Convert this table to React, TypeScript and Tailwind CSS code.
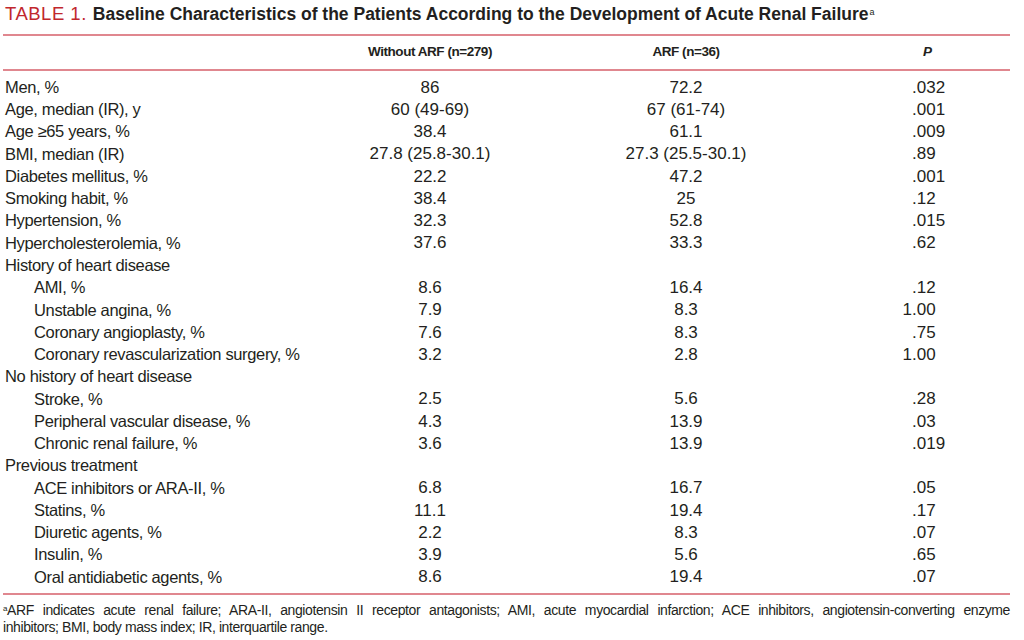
type Row = {
  label: string
  a?: string
  b?: string
  p?: string
  indent?: boolean
}

const rows: Row[] = [
  { label: 'Men, %', a: '86', b: '72.2', p: '.032' },
  { label: 'Age, median (IR), y', a: '60 (49-69)', b: '67 (61-74)', p: '.001' },
  { label: 'Age ≥65 years, %', a: '38.4', b: '61.1', p: '.009' },
  { label: 'BMI, median (IR)', a: '27.8 (25.8-30.1)', b: '27.3 (25.5-30.1)', p: '.89' },
  { label: 'Diabetes mellitus, %', a: '22.2', b: '47.2', p: '.001' },
  { label: 'Smoking habit, %', a: '38.4', b: '25', p: '.12' },
  { label: 'Hypertension, %', a: '32.3', b: '52.8', p: '.015' },
  { label: 'Hypercholesterolemia, %', a: '37.6', b: '33.3', p: '.62' },
  { label: 'History of heart disease' },
  { label: 'AMI, %', a: '8.6', b: '16.4', p: '.12', indent: true },
  { label: 'Unstable angina, %', a: '7.9', b: '8.3', p: '1.00', indent: true },
  { label: 'Coronary angioplasty, %', a: '7.6', b: '8.3', p: '.75', indent: true },
  { label: 'Coronary revascularization surgery, %', a: '3.2', b: '2.8', p: '1.00', indent: true },
  { label: 'No history of heart disease' },
  { label: 'Stroke, %', a: '2.5', b: '5.6', p: '.28', indent: true },
  { label: 'Peripheral vascular disease, %', a: '4.3', b: '13.9', p: '.03', indent: true },
  { label: 'Chronic renal failure, %', a: '3.6', b: '13.9', p: '.019', indent: true },
  { label: 'Previous treatment' },
  { label: 'ACE inhibitors or ARA-II, %', a: '6.8', b: '16.7', p: '.05', indent: true },
  { label: 'Statins, %', a: '11.1', b: '19.4', p: '.17', indent: true },
  { label: 'Diuretic agents, %', a: '2.2', b: '8.3', p: '.07', indent: true },
  { label: 'Insulin, %', a: '3.9', b: '5.6', p: '.65', indent: true },
  { label: 'Oral antidiabetic agents, %', a: '8.6', b: '19.4', p: '.07', indent: true },
]

// decimal-aligned P values: the point sits at a fixed offset in the column
function PValue({ value }: { value?: string }) {
  if (!value) return null
  const dot = value.indexOf('.')
  return (
    <div className="flex">
      <span className="w-[90px] text-right">{value.slice(0, dot)}</span>
      <span>{value.slice(dot)}</span>
    </div>
  )
}

export default function App() {
  return (
    <div className="h-[640px] w-[1024px] bg-white font-['Liberation_Sans',Arial,sans-serif] text-[#231f20]">
      <div className="ml-[3px] w-[1007px]">
        <h1 className="flex h-[34px] items-center pb-[5px] pl-[2px] leading-none">
          <span className="text-[18.5px] tracking-[0.5px] text-[#c1272d]">TABLE 1.</span>
          <span className="ml-[6px] text-[17.5px] font-bold">
            Baseline Characteristics of the Patients According to the Development of Acute Renal Failure
            <sup className="ml-[1px] text-[9px] font-normal">a</sup>
          </span>
        </h1>

        <div className="grid h-[37px] grid-cols-[307px_240px_272px_1fr] items-center border-y-2 border-[#e0878f] text-[13.5px] font-bold tracking-[-0.45px]">
          <div />
          <div className="text-center">Without ARF (n=279)</div>
          <div className="text-center">ARF (n=36)</div>
          <div className="pl-[101px] italic">P</div>
        </div>

        <div className="border-b-2 border-[#e0878f] pb-[5px] pt-[5px] text-[17px]">
          {rows.map((row) => (
            <div
              key={row.label}
              className="grid h-[22.27px] grid-cols-[307px_240px_272px_1fr] items-center leading-none"
            >
              <div
                className={`whitespace-nowrap text-[16.5px] tracking-[-0.35px] ${row.indent ? 'pl-[31px]' : 'pl-[2px]'}`}
              >
                {row.label}
              </div>
              <div className="text-center">{row.a}</div>
              <div className="text-center">{row.b}</div>
              <PValue value={row.p} />
            </div>
          ))}
        </div>

        <div className="pt-[7px] text-[14px] leading-[17px] tracking-[-0.4px]">
          <p className="text-justify [text-align-last:justify]">
            <sup className="text-[8px]">a</sup>ARF indicates acute renal failure; ARA-II, angiotensin II receptor
            antagonists; AMI, acute myocardial infarction; ACE inhibitors, angiotensin-converting enzyme
          </p>
          <p>inhibitors; BMI, body mass index; IR, interquartile range.</p>
        </div>
      </div>
    </div>
  )
}
